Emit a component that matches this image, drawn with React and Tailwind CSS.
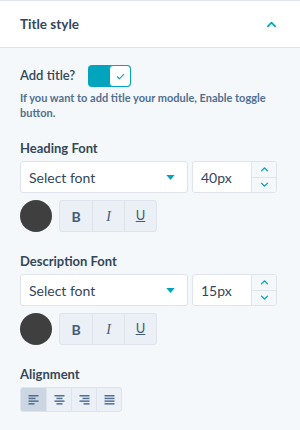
import { useState } from "react";

const font = { fontFamily: "Lato, 'Noto Sans', sans-serif" };

function Chevron({ up = true, className = "" }) {
  return (
    <svg viewBox="0 0 12 8" className={className} fill="none">
      <path
        d={up ? "M2 6.5 L6 2.5 L10 6.5" : "M2 1.5 L6 5.5 L10 1.5"}
        stroke="#00a4bd"
        strokeWidth="1.8"
        strokeLinecap="round"
        strokeLinejoin="round"
      />
    </svg>
  );
}

function Toggle({ on, onChange }) {
  return (
    <button
      type="button"
      onClick={() => onChange(!on)}
      className="flex h-[22px] w-[43px] overflow-hidden rounded-[4px] bg-[#00a4bd]"
    >
      <span className="ml-auto flex h-[22px] w-[22px] items-center justify-center rounded-[4px] border border-[#00a4bd] bg-white">
        <svg viewBox="0 0 10 8" className="h-[7px] w-[9px]" fill="none">
          <path d="M1 4 L3.8 6.6 L9 1.2" stroke="#00a4bd" strokeWidth="1.3" />
        </svg>
      </span>
    </button>
  );
}

function FontRow({ size }) {
  return (
    <div className="flex gap-[4px]">
      <div className="flex h-[32px] w-[168px] items-center justify-between rounded-[3px] border border-[#dfe3eb] bg-white pl-[8px] pr-[12px]">
        <span className="text-[14px] text-[#33475b]">Select font</span>
        <svg viewBox="0 0 10 6" className="h-[5px] w-[9px]">
          <path d="M0 0 L10 0 L5 6 Z" fill="#00a4bd" />
        </svg>
      </div>
      <div className="flex h-[32px] w-[85px] overflow-hidden rounded-[3px] border border-[#dfe3eb] bg-white">
        <div className="flex flex-1 items-center pl-[8px] text-[14px] text-[#33475b]">
          {size}
        </div>
        <div className="flex w-[25px] flex-col border-l border-[#dfe3eb] bg-[#f5f8fa]">
          <div className="flex flex-1 items-center justify-center border-b border-[#dfe3eb]">
            <Chevron up className="h-[6px] w-[9px]" />
          </div>
          <div className="flex flex-1 items-center justify-center">
            <Chevron up={false} className="h-[6px] w-[9px]" />
          </div>
        </div>
      </div>
    </div>
  );
}

function StyleRow() {
  return (
    <div className="mt-[7px] flex items-center gap-[7px]">
      <div className="h-[32px] w-[32px] rounded-full bg-[#3f3f3f]" />
      <div className="flex h-[32px] overflow-hidden rounded-[3px] border border-[#dfe3eb] bg-[#eaf0f6] text-[#425b76]">
        <div className="flex w-[32px] items-center justify-center text-[14px] font-bold">
          B
        </div>
        <div className="flex w-[32px] items-center justify-center border-l border-[#dfe3eb]">
          <span
            className="text-[14px] italic"
            style={{ fontFamily: "'Liberation Serif', serif" }}
          >
            I
          </span>
        </div>
        <div className="flex w-[32px] items-center justify-center border-l border-[#dfe3eb] text-[13px] underline">
          U
        </div>
      </div>
    </div>
  );
}

function AlignIcon({ kind }) {
  const rows = {
    left: [
      [0, 10],
      [0, 7],
      [0, 10],
      [0, 6],
    ],
    center: [
      [0, 10],
      [2, 6],
      [0, 10],
      [2, 6],
    ],
    right: [
      [0, 10],
      [3, 7],
      [0, 10],
      [4, 6],
    ],
    justify: [
      [0, 10],
      [0, 10],
      [0, 10],
      [0, 10],
    ],
  }[kind];
  return (
    <svg viewBox="0 0 10 10" className="h-[10px] w-[11px]">
      {rows.map(([x, w], i) => (
        <rect key={i} x={x} y={i * 2.7} width={w} height="1.5" fill="#516f90" />
      ))}
    </svg>
  );
}

export default function App() {
  const [on, setOn] = useState(true);
  const [align, setAlign] = useState("left");

  return (
    <div
      className="h-[430px] w-[300px] overflow-hidden border-t border-[#dfe3eb] bg-[#f5f8fa]"
      style={font}
    >
      <div className="flex h-[47px] items-center justify-between border-b border-[#dfe3eb] bg-white pl-5 pr-[23px]">
        <span className="text-[13.5px] font-bold text-[#33475b]">
          Title style
        </span>
        <Chevron up className="h-[8px] w-[11px]" />
      </div>

      <div className="px-5 pt-[17px]">
        <div className="flex items-center gap-[13px]">
          <span className="text-[13px] font-semibold text-[#33475b]">
            Add title?
          </span>
          <Toggle on={on} onChange={setOn} />
        </div>
        <p className="mt-[3px] text-[11px] font-bold leading-[15px] text-[#516f90]">
          If you want to add title your module, Enable toggle button.
        </p>

        <div className="mt-[19px] text-[13px] font-bold leading-[18px] text-[#33475b]">
          Heading Font
        </div>
        <div className="mt-[4px]">
          <FontRow size="40px" />
        </div>
        <StyleRow />

        <div className="mt-[20px] text-[13px] font-bold leading-[18px] text-[#33475b]">
          Description Font
        </div>
        <div className="mt-[4px]">
          <FontRow size="15px" />
        </div>
        <StyleRow />

        <div className="mt-[20px] text-[13px] font-bold leading-[18px] text-[#33475b]">
          Alignment
        </div>
        <div className="mt-[4px] flex h-[25px] w-fit overflow-hidden rounded-[3px] border border-[#dfe3eb] bg-[#eaf0f6]">
          {["left", "center", "right", "justify"].map((k, i) => (
            <button
              key={k}
              type="button"
              onClick={() => setAlign(k)}
              className={
                "flex w-[25px] items-center justify-center " +
                (i > 0 ? "border-l border-[#dfe3eb] " : "") +
                (align === k ? "bg-[#cbd6e2]" : "")
              }
            >
              <AlignIcon kind={k} />
            </button>
          ))}
        </div>
      </div>
    </div>
  );
}
